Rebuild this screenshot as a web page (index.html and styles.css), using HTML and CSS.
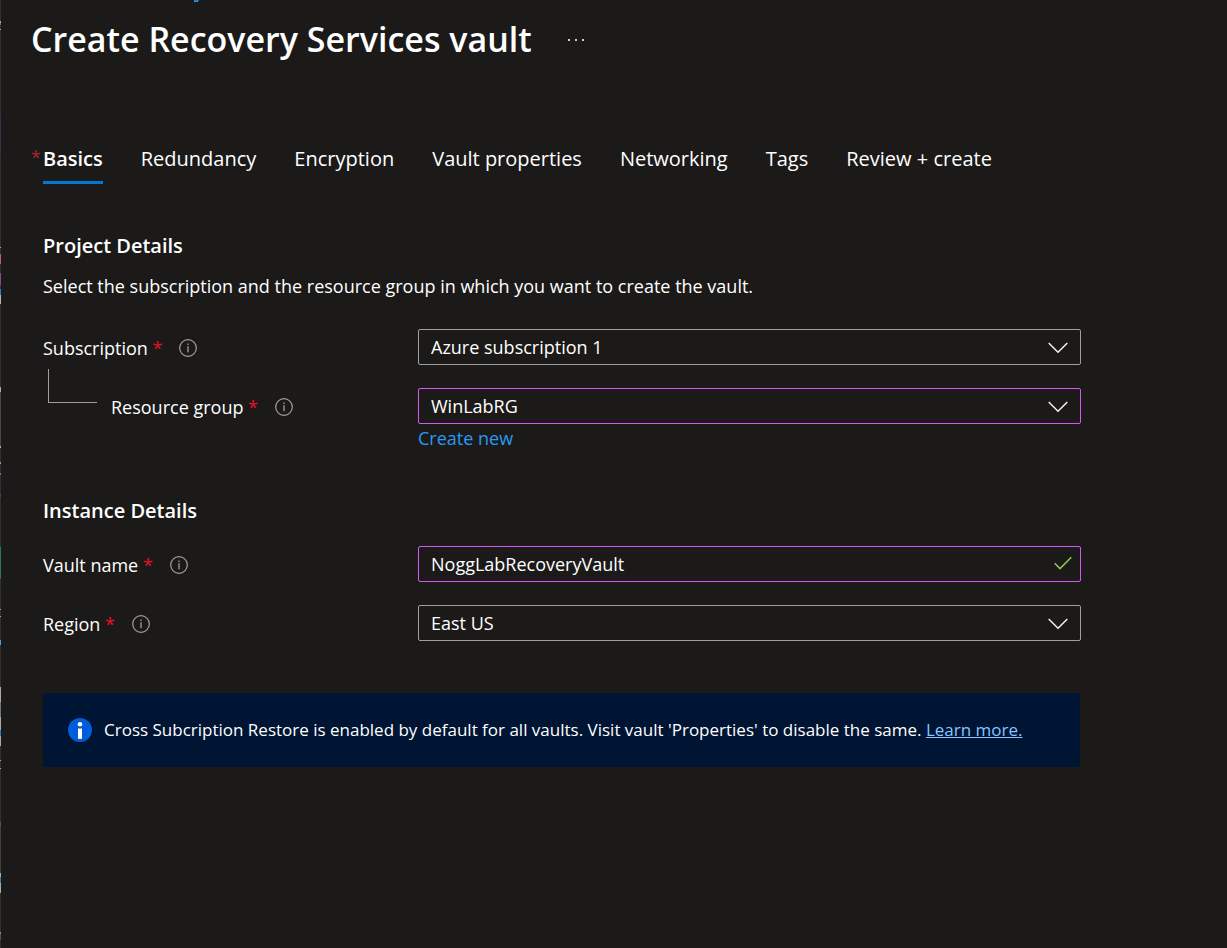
FILE: index.html
```html
<!DOCTYPE html>
<html lang="en">
<head>
<meta charset="utf-8">
<meta name="viewport" content="width=device-width, initial-scale=1">
<title>Create Recovery Services vault</title>
<link rel="stylesheet" href="styles.css">
</head>
<body>
<svg class="defs" width="0" height="0" aria-hidden="true">
  <symbol id="info" viewBox="0 0 18 18"><circle cx="9" cy="9" r="8.3" fill="none" stroke="currentColor" stroke-width="1.2"/><path d="M9 7.3v5.9M9 4.5v1.4" stroke="currentColor" stroke-width="1.3"/></symbol>
  <symbol id="chevron" viewBox="0 0 20 12"><path d="M.7 1 10 10.300 19.300 1" fill="none" stroke="currentColor" stroke-width="1.5"/></symbol>
</svg>
<div class="page">
  <div class="crumb"><svg width="5" height="2" viewBox="0 0 5 2" aria-hidden="true"><path d="M0 .3h1.500l1 .2L3 0h2L4 1.500 3 2H0z" fill="#2899f5"/></svg></div>
  <header class="header">
    <h1 class="title">Create Recovery Services vault</h1>
    <button class="more" type="button" aria-label="More"><svg width="18" height="4" viewBox="0 0 18 4"><path d="M1 2h2v2H1zM8 2h2v2H8zM15 2h2v2h-2z" fill="#d0cfce"/></svg></button>
  </header>
  <main class="main">
    <nav class="tabs">
      <button class="tab tab-active" type="button"><span class="tab-star">*</span>Basics</button>
      <button class="tab" type="button">Redundancy</button>
      <button class="tab" type="button">Encryption</button>
      <button class="tab" type="button">Vault properties</button>
      <button class="tab" type="button">Networking</button>
      <button class="tab" type="button">Tags</button>
      <button class="tab" type="button">Review + create</button>
    </nav>
    <form class="form">
      <section class="section">
        <h2 class="heading">Project Details</h2>
        <p class="intro">Select the subscription and the resource group in which you want to create the vault.</p>
        <div class="rows">
          <div class="row">
            <div class="name"><label for="subscription">Subscription <span class="star">*</span></label><svg class="info"><use href="#info"/></svg></div>
            <div class="field"><select class="control" id="subscription"><option>Azure subscription 1</option></select><svg class="chevron"><use href="#chevron"/></svg></div>
          </div>
          <div class="row">
            <div class="name"><span class="branch"></span><label for="group">Resource group <span class="star">*</span></label><svg class="info"><use href="#info"/></svg></div>
            <div>
              <div class="field"><select class="control control-edited" id="group"><option>WinLabRG</option></select><svg class="chevron"><use href="#chevron"/></svg></div>
              <a class="create" href="#">Create new</a>
            </div>
          </div>
        </div>
      </section>
      <section class="section">
        <h2 class="heading">Instance Details</h2>
        <div class="rows">
          <div class="row">
            <div class="name"><label for="vault">Vault name <span class="star">*</span></label><svg class="info"><use href="#info"/></svg></div>
            <div class="field"><input class="control control-edited" id="vault" type="text" value="NoggLabRecoveryVault" spellcheck="false"><svg class="check" viewBox="0 0 18 14"><path d="M.7 7.300 6 12.600 17.300 1.300" fill="none" stroke="currentColor" stroke-width="1.600"/></svg></div>
          </div>
          <div class="row">
            <div class="name"><label for="region">Region <span class="star">*</span></label><svg class="info"><use href="#info"/></svg></div>
            <div class="field"><select class="control" id="region"><option>East US</option></select><svg class="chevron"><use href="#chevron"/></svg></div>
          </div>
        </div>
      </section>
      <div class="banner">
        <svg class="banner-icon" viewBox="0 0 24 24" aria-hidden="true"><circle cx="12" cy="12" r="12" fill="#015cda"/><circle cx="12" cy="6.200" r="2.300" fill="#fff"/><path d="M10 10.500h4v10.300h-4z" fill="#fff"/></svg>
        <p class="banner-text">Cross Subcription Restore is enabled by default for all vaults. Visit vault 'Properties' to disable the same. <a class="learn" href="#">Learn more.</a></p>
      </div>
    </form>
  </main>
</div>
</body>
</html>
```
FILE: styles.css
```css
* { box-sizing: border-box; }
body {
  margin: 0;
  background: #1b1a19;
  color: #fff;
  font-family: "Open Sans", "Noto Sans", sans-serif;
  font-size: 18px;
  line-height: 24px;
}
h1, h2, p { margin: 0; }
button, select, input { font: inherit; color: inherit; }
.defs { position: absolute; }

/* thin sliver of the neighbouring window along the left edge */
.page {
  min-height: 100vh;
  background: linear-gradient(#323130 0 21px, #aaa 21px 23px, #a06030 23px 25px, #323130 25px 29px, #aaa 29px 30px, #323130 30px 115px, #33304a 115px 154px, #323130 154px 247px, #aaa 247px 248px, #323130 248px 254px, #c4605c 254px 264px, #323130 264px 273px, #8a4a9a 273px 285px, #3b3a45 285px 289px, #2a80b8 289px 295px, #b5b5b5 295px 304px, #323130 304px 387px, #aaa 387px 392px, #484746 392px 446px, #aaa 446px 448px, #323130 448px 462px, #78a0c8 462px 464px, #323130 464px 473px, #4a7cc0 473px 475px, #323130 475px 494px, #24489a 494px 497px, #323130 497px 547px, #2c7a50 547px 579px, #323130 579px 609px, #aaa 609px 610px, #323130 610px 616px, #aaa 616px 617px, #323130 617px 640px, #5a9ad0 640px 645px, #323130 645px 687px, #aaa 687px 702px, #707784 702px 717px, #aaa 717px 730px, #2a80b8 730px 736px, #aaa 736px 746px, #323130 746px 760px, #aaa 760px 761px, #323130 761px 768px, #aaa 768px 769px, #323130 769px 822px, #555 822px 826px, #424140 826px 873px, #aaa 873px 877px, #2a80b8 877px 883px, #aaa 883px 893px, #323130 893px 932px, #5a9ad0 932px 934px, #804030 934px 940px, #323130 940px) 0 0 / 1px 948px no-repeat;
}
.crumb { display: flex; height: 2px; padding-left: 194px; }
.header { display: flex; align-items: center; gap: 35px; padding: 13px 31px 0; }
.title { font-size: 34px; line-height: 48px; font-weight: 600; }
.more { display: flex; padding: 0; border: 0; background: none; }
.main { max-width: 1124px; padding: 82px 43px 0; }

.tabs { display: flex; gap: 38px; }
.tab {
  position: relative;
  padding: 0 0 9px;
  border: 0;
  border-bottom: 3px solid transparent;
  background: none;
  font-size: 20px;
  line-height: 27px;
  white-space: nowrap;
}
.tab-active { border-bottom-color: #0078d4; font-weight: 600; }
.tab-star { position: absolute; top: 0; right: 100%; padding-right: 2px; color: #a4262c; font-weight: 400; font-size: 18px; line-height: 24px; }

.form { padding-top: 48px; }
.section { margin-bottom: 47px; }
.heading { font-size: 20px; line-height: 28px; font-weight: 600; }
.intro { margin-top: 14px; }
.rows { display: grid; gap: 23px; margin-top: 21px; }
.intro + .rows { margin-top: 31px; }
.row { display: grid; grid-template-columns: 375px minmax(0, 1fr); }
.name { display: flex; align-items: center; height: 36px; padding-top: 1px; }
.star { color: #e81123; }
.info { width: 18px; height: 18px; margin-left: 17px; color: #a19f9d; }
.branch { align-self: flex-start; width: 49px; height: 34px; margin: -20px 14px 0 5px; border: solid #a19f9d; border-width: 0 0 1px 1px; }
.field { position: relative; }
.control {
  display: block;
  width: 100%;
  height: 36px;
  padding: 0 48px 0 12px;
  border: 1px solid #a19f9d;
  border-radius: 2px;
  outline: 0;
  appearance: none;
  background: #1b1a19;
}
.control-edited { border-color: #d757f5; }
.chevron, .check { position: absolute; top: 13px; pointer-events: none; }
.chevron { right: 13px; width: 20px; height: 12px; color: #f3f2f1; }
.check { top: 10px; right: 9px; width: 18px; height: 14px; color: #92c353; }
.create { display: block; width: fit-content; margin-top: 2px; color: #2899f5; text-decoration: none; }

.banner { display: flex; align-items: center; gap: 12px; min-height: 74px; margin: 52px 1px 0 0; padding: 12px 25px; border-radius: 3px; background: #001433; }
.banner-icon { flex: none; width: 24px; height: 24px; }
.banner-text { font-size: 17px; }
.learn { color: #82c7ff; }
```
